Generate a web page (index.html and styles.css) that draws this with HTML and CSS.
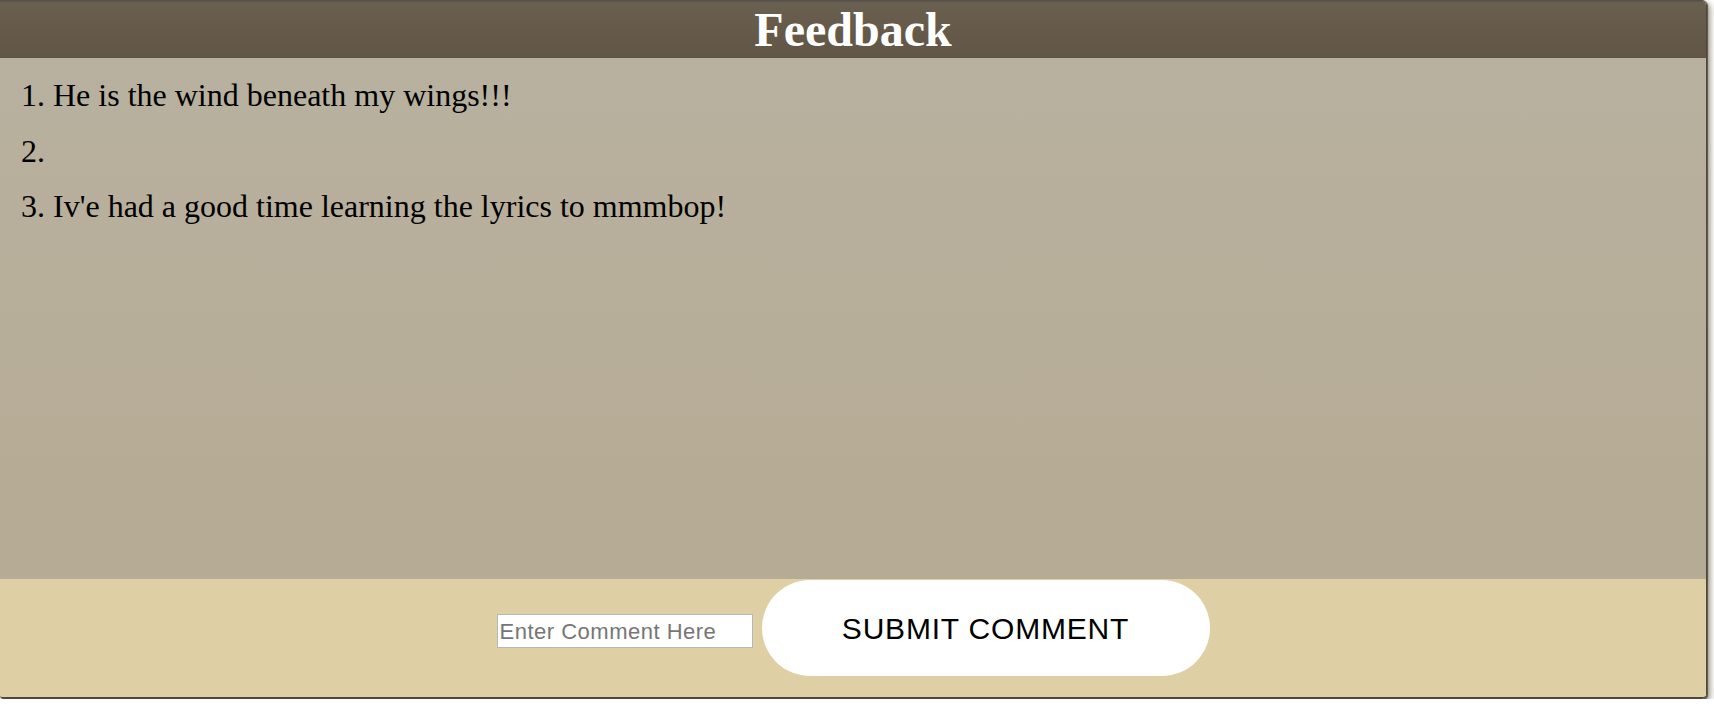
FILE: index.html
```html
<!DOCTYPE html>
<html>
<head>
<meta charset="utf-8">
<title>Feedback</title>
<link rel="stylesheet" href="styles.css">
</head>
<body>
<div class="panel">
  <header class="panel-head">
    <h1 class="title">Feedback</h1>
  </header>
  <main class="panel-body">
    <ol class="comments">
      <li>He is the wind beneath my wings!!!</li>
      <li></li>
      <li>Iv'e had a good time learning the lyrics to mmmbop!</li>
    </ol>
  </main>
  <footer class="panel-foot">
    <input class="comment-input" type="text" placeholder="Enter Comment Here">
    <button class="submit-btn" type="button">SUBMIT COMMENT</button>
  </footer>
</div>
</body>
</html>
```

FILE: styles.css
```css
html, body {
  margin: 0;
  padding: 0;
  background: #ffffff;
}

.panel {
  width: 1706px;
  border-top: 1px solid #54504a;
  border-right: 1px solid #4d473d;
  border-bottom: 2px solid #4d473d;
  border-radius: 0 5px 5px 4px;
  box-shadow: 1px 1px 1px #5a5448, 3px 3px 6px rgba(110, 100, 75, 0.7);
  overflow: hidden;
  font-family: "Liberation Serif", "Times New Roman", serif;
}

.panel-head {
  height: 57px;
  border-top: 1px solid #5c564c;
  box-sizing: border-box;
  background: linear-gradient(#6a604f, #615545);
}

.title {
  margin: 0;
  color: #ffffff;
  font-size: 48px;
  font-weight: bold;
  line-height: 55px;
  text-align: center;
}

.panel-body {
  display: block;
  height: 521px;
  background: linear-gradient(#b8b19f, #b6ab94);
  overflow: hidden;
}

.comments {
  margin: 0;
  padding: 10px 0 0 53px;
  font-size: 32px;
  color: #000000;
}

.comments li {
  line-height: 55.5px;
  min-height: 55.5px;
}

.panel-foot {
  height: 118px;
  box-sizing: border-box;
  padding-top: 1px;
  background: #dfcfa5;
  display: flex;
  justify-content: center;
  align-items: baseline;
  gap: 9px;
}

.comment-input {
  width: 256px;
  height: 34px;
  box-sizing: border-box;
  margin: 0;
  border: 1px solid #b8b8b8;
  padding: 2px 2px 0;
  background: #ffffff;
  font-family: "Liberation Sans", Arial, sans-serif;
  font-size: 22px;
  letter-spacing: 0.5px;
  outline: none;
}

.comment-input::placeholder {
  color: #767676;
}

.submit-btn {
  width: 448px;
  height: 96px;
  margin: 0;
  border: none;
  border-radius: 48px;
  background: #ffffff;
  color: #000000;
  font-family: "Liberation Sans", Arial, sans-serif;
  font-size: 30px;
  letter-spacing: 0.8px;
  padding: 2px 0 0;
  cursor: pointer;
}
```
